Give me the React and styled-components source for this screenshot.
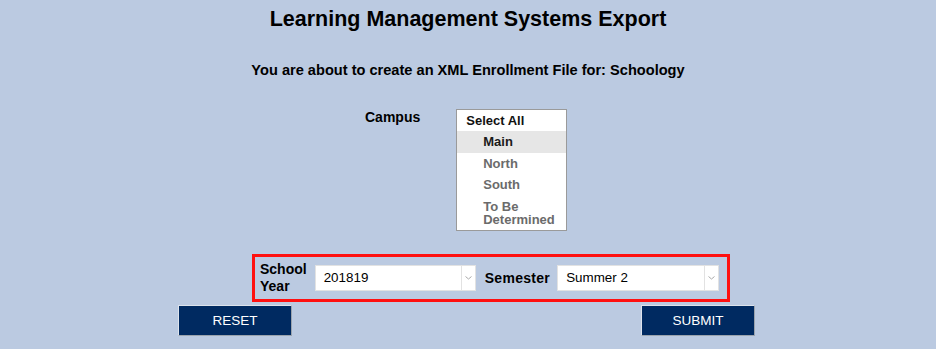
import styled, { createGlobalStyle } from "styled-components";

const GlobalStyle = createGlobalStyle`
  body {
    margin: 0;
    background: #bbcae1;
    font-family: "Liberation Sans", Arial, sans-serif;
  }
`

const campuses = [
  { name: "Main", active: true },
  { name: "North" },
  { name: "South" },
  { name: "To Be Determined" },
]

function Chevron() {
  return (
    <svg width="7" height="4" viewBox="0 0 7 4">
      <path d="M0.5 0.5 L3.5 3 L6.5 0.5" fill="none" stroke="#aaa" strokeWidth="1" />
    </svg>
  )
}

function DropDown({ value, width }) {
  return (
    <SelectBox width={width}>
      <SelectValue>{value}</SelectValue>
      <SelectArrow><Chevron /></SelectArrow>
    </SelectBox>
  )
}

export default function App() {
  return (
    <Page>
      <GlobalStyle />
      <Title>Learning Management Systems Export</Title>
      <Subtitle>You are about to create an XML Enrollment File for: Schoology</Subtitle>

      <CampusRow>
        <Label>Campus</Label>
        <ListBox>
          <ListHeader>Select All</ListHeader>
          {campuses.map((c) => (
            <ListItem key={c.name} active={c.active}>{c.name}</ListItem>
          ))}
        </ListBox>
      </CampusRow>

      <Highlight>
        <Label>School<br />Year</Label>
        <DropDown value="201819" width={161} />
        <SemesterLabel>Semester</SemesterLabel>
        <DropDown value="Summer 2" width={162} />
      </Highlight>

      <ButtonRow>
        <Button>RESET</Button>
        <Button>SUBMIT</Button>
      </ButtonRow>
    </Page>
  )
};

const Page = styled.div`
  width: 936px;
  height: 349px;
  padding-top: 7px;
  box-sizing: border-box;
`

const Title = styled.h1`
  margin: 0;
  text-align: center;
  font-size: 21.5px;
  line-height: 25px;
  font-weight: bold;
  color: #000;
`

const Subtitle = styled.div`
  margin-top: 30px;
  text-align: center;
  font-size: 14.6px;
  line-height: 17px;
  font-weight: bold;
  color: #000;
`

const CampusRow = styled.div`
  display: flex;
  align-items: flex-start;
  margin: 30px 0 0 365px;
`

const Label = styled.div`
  font-size: 14px;
  line-height: 17px;
  font-weight: bold;
  color: #000;
`

const SemesterLabel = styled(Label)`
  margin-right: -1px;
  letter-spacing: 0.3px;
`

const ListBox = styled.div`
  margin-left: 36px;
  width: 109px;
  height: 120px;
  border: 1px solid #9a9a9a;
  background: #fff;
`

const ListHeader = styled.div`
  height: 21px;
  line-height: 21px;
  padding-left: 9px;
  font-size: 13px;
  font-weight: bold;
  color: #111;
`

const ListItem = styled.div`
  padding: 3px 4px 3.5px 26px;
  min-height: 15px;
  line-height: 15px;
  font-size: 13px;
  font-weight: bold;
  color: ${(props) => (props.active ? '#1a1a1a' : '#6b6b6b')};
  background: ${(props) => (props.active ? '#e6e6e6' : 'transparent')};
  &:last-child {
    line-height: 13px;
    padding-top: 4px;
  }
`

const Highlight = styled.div`
  display: flex;
  align-items: center;
  gap: 8px;
  margin: 23px 0 0 252px;
  width: 478px;
  height: 48px;
  box-sizing: border-box;
  padding-left: 5px;
  border: 3px solid #ff1010;
`

const SelectBox = styled.div`
  display: flex;
  width: ${(props) => props.width}px;
  height: 26px;
  box-sizing: border-box;
  background: #fff;
  border: 1px solid #e2e2e2;
  margin-right: 1px;
`

const SelectValue = styled.div`
  flex: 1;
  padding-left: 8px;
  font-size: 13.4px;
  line-height: 24px;
  color: #000;
`

const SelectArrow = styled.div`
  width: 13px;
  display: flex;
  align-items: center;
  justify-content: center;
  border-left: 1px solid #e2e2e2;
`

const ButtonRow = styled.div`
  display: flex;
  justify-content: space-between;
  width: 577px;
  margin: 3px 0 0 178px;
`

const Button = styled.button`
  width: 114px;
  height: 31px;
  background: #002a61;
  color: #fff;
  font-family: "Liberation Sans", Arial, sans-serif;
  font-size: 13.5px;
  border: 1px solid #dde3ec;
  border-right-color: #9aa3ad;
  border-bottom-color: #9aa3ad;
  padding: 0;
`
